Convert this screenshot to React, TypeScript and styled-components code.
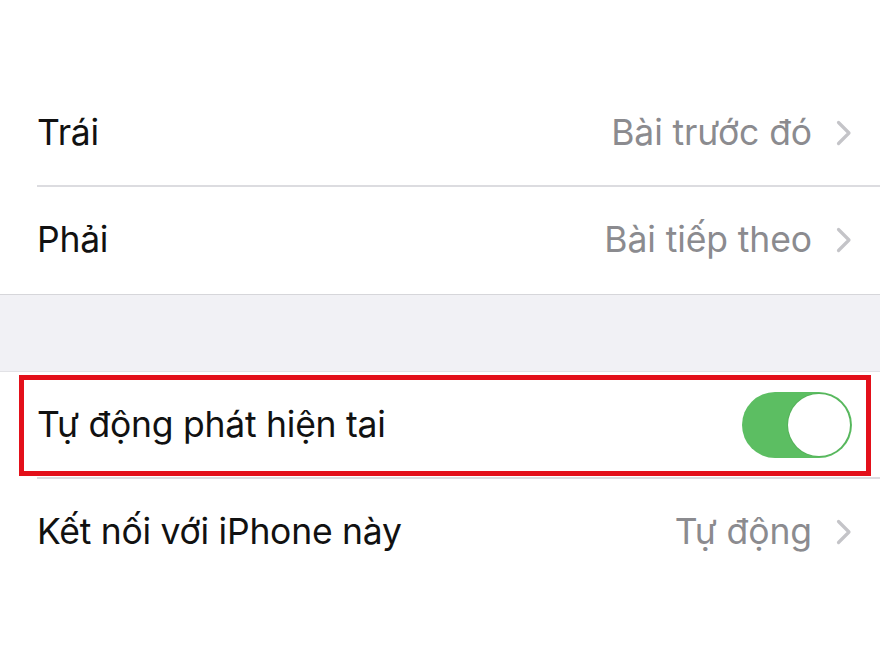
import styled, { createGlobalStyle } from "styled-components";

const GlobalStyle = createGlobalStyle`
  html, body {
    margin: 0;
    padding: 0;
    background: #ffffff;
  }
  body {
    font-family: Inter, "Noto Sans", "Liberation Sans", sans-serif;
    -webkit-font-smoothing: antialiased;
  }
`;

const Page = styled.div`
  width: 880px;
  height: 660px;
  overflow: hidden;
  display: flex;
  flex-direction: column;
  background: #ffffff;
`;

const TopSpace = styled.div`
  height: 80px;
  background: #ffffff;
`;

const Group = styled.div`
  display: flex;
  flex-direction: column;
  background: #ffffff;
`;

const Band = styled.div`
  height: 76px;
  background: #f1f1f5;
  border-top: 1px solid #d6d6da;
  border-bottom: 1px solid #e2e2e6;
`;

const Row = styled.div<{ $highlight?: boolean; $divider?: boolean }>`
  position: relative;
  height: 107px;
  display: flex;
  align-items: center;
  justify-content: space-between;
  padding: 0 28px 2px 37px;
  box-sizing: border-box;

  ${({ $divider }) =>
    $divider &&
    `
    &::before {
      content: "";
      position: absolute;
      left: 37px;
      right: 0;
      bottom: 0;
      height: 2px;
      background: #dcdce0;
    }
  `}

  ${({ $highlight }) =>
    $highlight &&
    `
    &::after {
      content: "";
      position: absolute;
      left: 19px;
      right: 9px;
      top: 3px;
      bottom: 3px;
      border: 5px solid #e3101a;
      pointer-events: none;
    }
  `}
`;

const Label = styled.span`
  font-size: 35.5px;
  color: #111111;
  letter-spacing: -0.25px;
`;

const Detail = styled.div`
  display: flex;
  align-items: center;
  gap: 24px;
`;

const Value = styled.span`
  font-size: 35.5px;
  color: #8b8b8f;
  letter-spacing: -0.1px;
`;

const Switch = styled.div<{ $on: boolean }>`
  width: 110px;
  height: 66px;
  border-radius: 33px;
  background: ${({ $on }) => ($on ? "#5cbe62" : "#e5e5ea")};
  display: flex;
  align-items: center;
  justify-content: ${({ $on }) => ($on ? "flex-end" : "flex-start")};
  padding: 2px;
  box-sizing: border-box;
`;

const Knob = styled.div`
  width: 62px;
  height: 62px;
  border-radius: 50%;
  background: #ffffff;
  box-shadow: 0 0 0 1px rgba(80, 170, 85, 0.6);
`;

const Chevron = () => (
  <svg width="16" height="26" viewBox="0 0 16 26" fill="none">
    <path d="M2.5 2.5 L13 13 L2.5 23.5" stroke="#c4c4c8" strokeWidth="3.2" strokeLinecap="round" strokeLinejoin="round" />
  </svg>
);

interface LinkRowProps {
  label: string;
  value: string;
  divider?: boolean;
}

const LinkRow = ({ label, value, divider }: LinkRowProps) => (
  <Row $divider={divider}>
    <Label>{label}</Label>
    <Detail>
      <Value>{value}</Value>
      <Chevron />
    </Detail>
  </Row>
);

const App = () => {
  return (
    <>
      <GlobalStyle />
      <Page>
        <TopSpace />
        <Group>
          <LinkRow label="Trái" value="Bài trước đó" divider />
          <LinkRow label="Phải" value="Bài tiếp theo" />
        </Group>
        <Band />
        <Group>
          <Row $highlight $divider>
            <Label>Tự động phát hiện tai</Label>
            <Switch $on>
              <Knob />
            </Switch>
          </Row>
          <LinkRow label="Kết nối với iPhone này" value="Tự động" />
        </Group>
      </Page>
    </>
  );
};

export default App;
